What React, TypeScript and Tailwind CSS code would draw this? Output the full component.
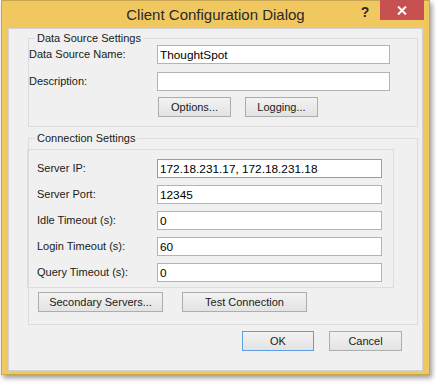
import React from "react";

function Btn({ label, className = "", primary = false }: { label: string; className?: string; primary?: boolean }) {
  return (
    <button
      type="button"
      className={
        "h-[20px] flex items-center justify-center text-[11px] text-[#1a1a1a] bg-gradient-to-b from-[#f2f2f2] to-[#e3e3e3] border " +
        (primary ? "border-[#5e9fe3] " : "border-[#adadad] ") +
        className
      }
    >
      {label}
    </button>
  );
}

function Field({ value = "", width, focused = false }: { value?: string; width: string; focused?: boolean }) {
  return (
    <input
      readOnly
      value={value}
      className={
        "h-[19px] bg-white px-[2px] text-[11.8px] text-black outline-none border " +
        (focused ? "border-[#6aa7e6] " : "border-[#b4b4b4] ") +
        width
      }
    />
  );
}

export default function App() {
  const rows: { label: string; value: string; focused?: boolean }[] = [
    { label: "Server IP:", value: "172.18.231.17, 172.18.231.18", focused: true },
    { label: "Server Port:", value: "12345" },
    { label: "Idle Timeout (s):", value: "0" },
    { label: "Login Timeout (s):", value: "60" },
    { label: "Query Timeout (s):", value: "0" },
  ];
  return (
    <div className="w-[436px] h-[384px] bg-white pl-px font-['Liberation_Sans',Arial,sans-serif]">
      <div className="w-[429px] h-[375px] bg-[#f1c75f] border border-[#c7a552] shadow-[2px_3px_5px_rgba(0,0,0,0.4)] flex flex-col">
        {/* title bar */}
        <div className="h-[27px] grid grid-cols-[1fr_auto_1fr] items-start">
          <div />
          <div className="text-[15px] leading-[27px] text-[#2a2a2a] whitespace-nowrap">Client Configuration Dialog</div>
          <div className="flex justify-end items-start">
            <span className="mt-[3px] w-[14px] text-[14px] font-bold text-[#2a2a2a] leading-[16px] mr-[8px] text-center">?</span>
            <div className="-mt-px w-[44px] h-[20px] bg-[#c75050] mr-[5px] flex items-center justify-center">
              <svg width="10" height="9" viewBox="0 0 10 9">
                <path d="M1 0.5 L9 8.5 M9 0.5 L1 8.5" stroke="white" strokeWidth="2" fill="none" />
              </svg>
            </div>
          </div>
        </div>
        {/* client area */}
        <div className="mx-[6px] mb-[3px] flex-1 bg-[#f0f0f0] border border-[#d2d2d2] flex flex-col">
          <fieldset className="ml-[19px] mt-[2px] w-[390px] border border-[#dcdcdc] pb-[9px]">
            <legend className="ml-[6px] px-[2px] text-[11px] leading-[14px] text-[#1a1a1a]">Data Source Settings</legend>
            <div className="flex items-center">
              <span className="w-[128px] text-[11px] text-[#1a1a1a]">Data Source Name:</span>
              <Field value="ThoughtSpot" width="w-[233px]" />
            </div>
            <div className="flex items-center mt-[8px]">
              <span className="w-[128px] text-[11px] text-[#1a1a1a]">Description:</span>
              <Field width="w-[233px]" />
            </div>
            <div className="flex mt-[6px] pl-[129px]">
              <Btn label="Options..." className="w-[73px]" />
              <Btn label="Logging..." className="w-[73px] ml-[14px]" />
            </div>
          </fieldset>
          <fieldset className="ml-[19px] mt-[4px] w-[390px] border border-[#dcdcdc] pb-[12px]">
            <legend className="ml-[6px] px-[2px] text-[11px] leading-[14px] text-[#1a1a1a]">Connection Settings</legend>
            <div className="mt-[4px] -ml-[2px] w-[367px] border border-[#dcdcdc] pt-[9px] pb-[5px] pl-[9px] flex flex-col gap-[7px]">
              {rows.map((r) => (
                <div key={r.label} className="flex items-center">
                  <span className="w-[120px] text-[11px] text-[#1a1a1a]">{r.label}</span>
                  <Field value={r.value} width="w-[225px]" focused={r.focused} />
                </div>
              ))}
            </div>
            <div className="flex mt-[4px] pl-[9px]">
              <Btn label="Secondary Servers..." className="w-[125px]" />
              <Btn label="Test Connection" className="w-[125px] ml-[19px]" />
            </div>
          </fieldset>
          <div className="flex justify-end mt-[6px] pr-[20px]">
            <Btn label="OK" className="w-[72px]" primary />
            <Btn label="Cancel" className="w-[73px] ml-[15px]" />
          </div>
        </div>
      </div>
    </div>
  );
}
